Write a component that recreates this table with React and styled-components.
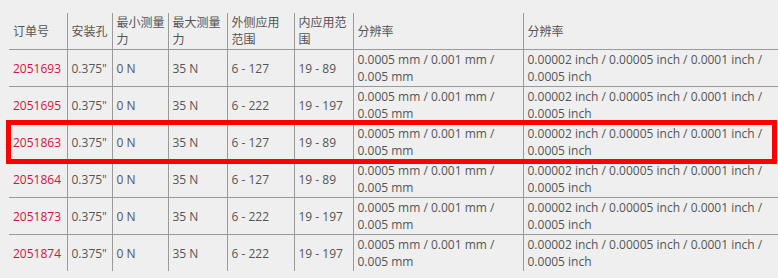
import React from 'react';
import styled, { createGlobalStyle } from 'styled-components';

const GlobalStyle = createGlobalStyle`
  html, body {
    margin: 0;
    padding: 0;
    background: #efefef;
    overflow: hidden;
  }
`;

const Page = styled.div`
  position: relative;
  width: 778px;
  height: 278px;
  padding: 13px 0 0 9px;
  box-sizing: border-box;
  font-family: "Open Sans", "Noto Sans CJK SC", sans-serif;
  font-size: 12px;
  line-height: 17px;
  color: #555;
`;

const Table = styled.table`
  border-collapse: collapse;
  table-layout: fixed;
  width: 778px;
`;

const HeadCell = styled.th`
  font-weight: normal;
  text-align: left;
  vertical-align: middle;
  white-space: pre-line;
  padding: 1px 2px 1px 4px;
  border-left: ${({ first }) => (first ? 'none' : '1px solid #9a9a9a')};
  border-bottom: 1px solid #9a9a9a;
`;

const Cell = styled.td`
  vertical-align: middle;
  padding: 1px 4px;
  border-left: ${({ first }) => (first ? 'none' : '1px solid #9a9a9a')};
  border-top: 1px solid #9a9a9a;
`;

const OrderLink = styled.a`
  color: #d5123f;
  text-decoration: none;
`;

const Highlight = styled.div`
  position: absolute;
  left: 6px;
  top: 120px;
  width: 771px;
  height: 44px;
  box-sizing: border-box;
  border: 5px solid #ff0000;
  pointer-events: none;
`;

const widths = [58, 45, 56, 59, 67, 59, 170, 264];

const headers = ['订单号', '安装孔', '最小测量\n力', '最大测量\n力', '外侧应用\n范围', '内应用范\n围', '分辨率', '分辨率'];

const metric = '0.0005 mm / 0.001 mm / 0.005 mm';
const imperial = '0.00002 inch / 0.00005 inch / 0.0001 inch / 0.0005 inch';

const rows = [
  ['2051693', '6 - 127', '19 - 89'],
  ['2051695', '6 - 222', '19 - 197'],
  ['2051863', '6 - 127', '19 - 89'],
  ['2051864', '6 - 127', '19 - 89'],
  ['2051873', '6 - 222', '19 - 197'],
  ['2051874', '6 - 222', '19 - 197'],
];

export default function App() {
  return (
    <>
      <GlobalStyle />
      <Page>
        <Table>
          <colgroup>
            {widths.map((w, i) => (
              <col key={i} style={{ width: w }} />
            ))}
          </colgroup>
          <thead>
            <tr>
              {headers.map((h, i) => (
                <HeadCell key={i} first={i === 0}>{h}</HeadCell>
              ))}
            </tr>
          </thead>
          <tbody>
            {rows.map(([order, outer, inner]) => (
              <tr key={order}>
                <Cell first>
                  <OrderLink href="#">{order}</OrderLink>
                </Cell>
                <Cell>0.375"</Cell>
                <Cell>0 N</Cell>
                <Cell>35 N</Cell>
                <Cell>{outer}</Cell>
                <Cell>{inner}</Cell>
                <Cell>{metric}</Cell>
                <Cell>{imperial}</Cell>
              </tr>
            ))}
          </tbody>
        </Table>
        <Highlight />
      </Page>
    </>
  );
}
